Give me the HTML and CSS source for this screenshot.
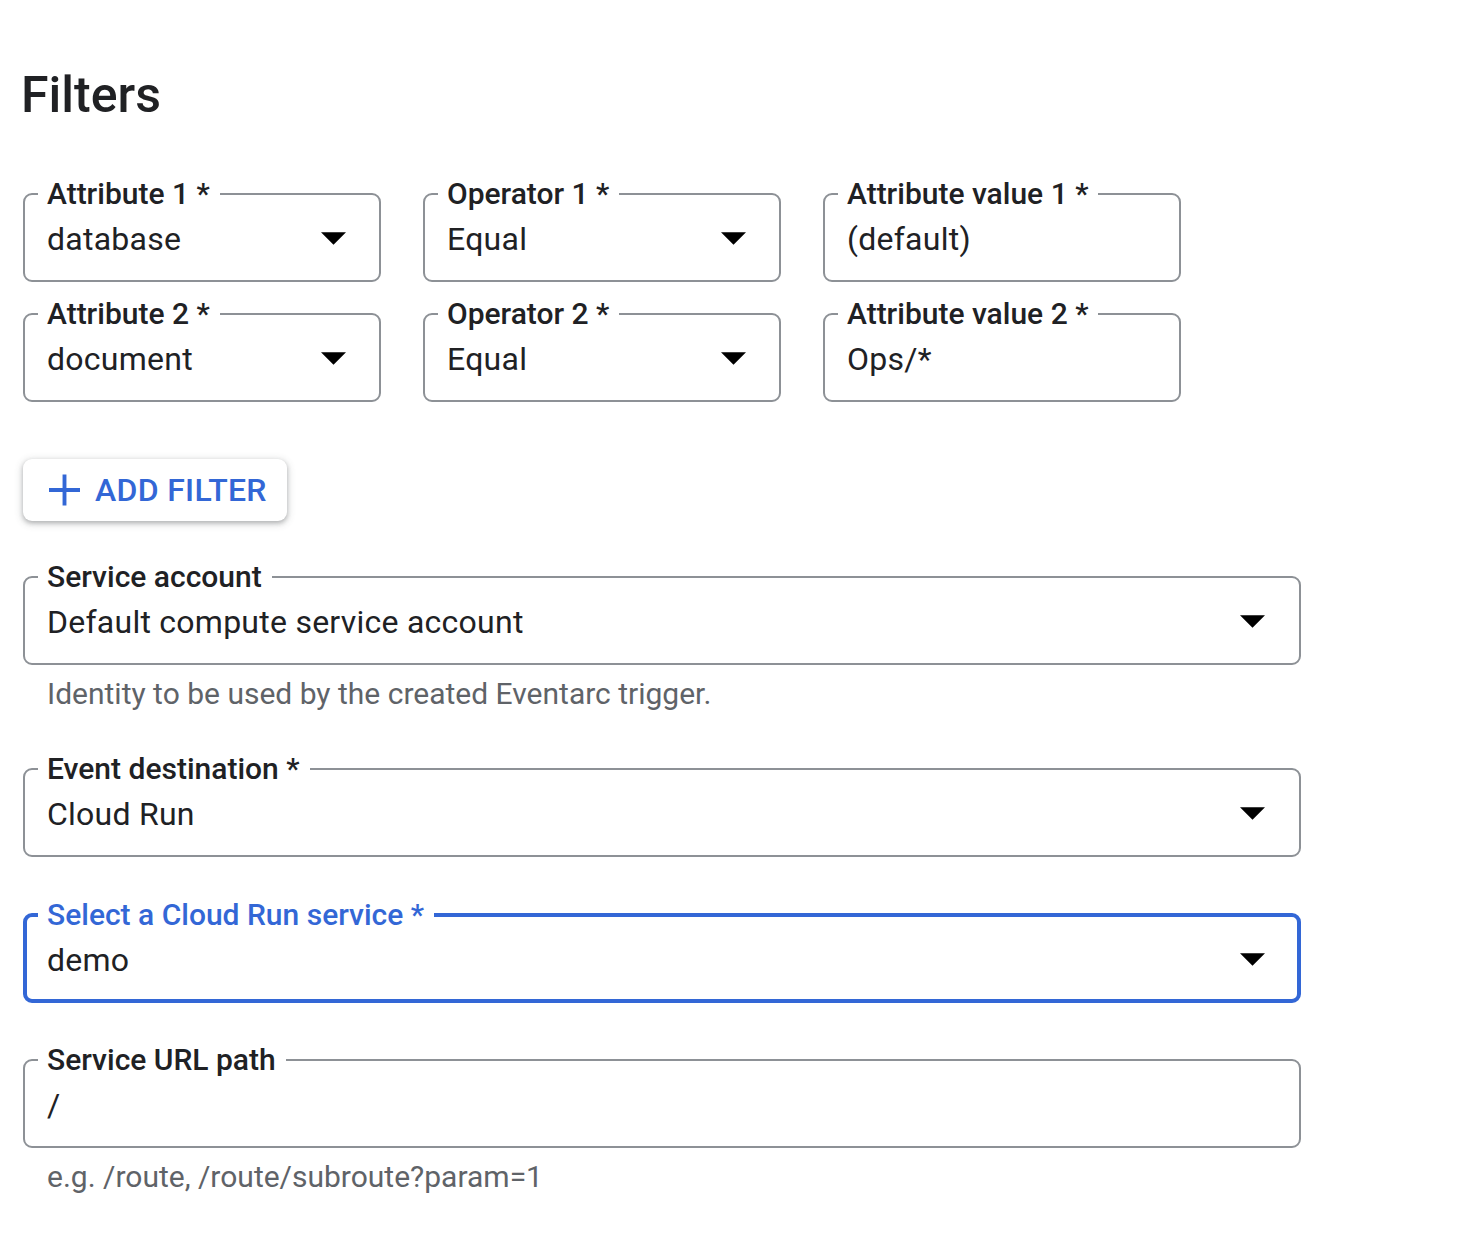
FILE: index.html
```html
<!DOCTYPE html>
<html lang="en">
<head>
<meta charset="utf-8">
<title>Filters</title>
<link rel="stylesheet" href="styles.css">
</head>
<body>
<main class="page">
  <h1 class="title">Filters</h1>

  <div class="filter-grid">
    <fieldset class="field">
      <legend class="field-label">Attribute 1 *</legend>
      <div class="field-row"><span class="field-value">database</span><svg class="arrow" viewBox="0 0 26 13"><path d="M0 0h26L13 13z"/></svg></div>
    </fieldset>
    <fieldset class="field">
      <legend class="field-label">Operator 1 *</legend>
      <div class="field-row"><span class="field-value">Equal</span><svg class="arrow" viewBox="0 0 26 13"><path d="M0 0h26L13 13z"/></svg></div>
    </fieldset>
    <fieldset class="field">
      <legend class="field-label">Attribute value 1 *</legend>
      <div class="field-row"><span class="field-value">(default)</span></div>
    </fieldset>
    <fieldset class="field">
      <legend class="field-label">Attribute 2 *</legend>
      <div class="field-row"><span class="field-value">document</span><svg class="arrow" viewBox="0 0 26 13"><path d="M0 0h26L13 13z"/></svg></div>
    </fieldset>
    <fieldset class="field">
      <legend class="field-label">Operator 2 *</legend>
      <div class="field-row"><span class="field-value">Equal</span><svg class="arrow" viewBox="0 0 26 13"><path d="M0 0h26L13 13z"/></svg></div>
    </fieldset>
    <fieldset class="field">
      <legend class="field-label">Attribute value 2 *</legend>
      <div class="field-row"><span class="field-value">Ops/*</span></div>
    </fieldset>
  </div>

  <button class="add-btn" type="button">
    <svg class="plus" viewBox="0 0 32 32"><path d="M16 0v32M0 16h32"/></svg>
    <span>ADD FILTER</span>
  </button>

  <div class="wide">
    <fieldset class="field">
      <legend class="field-label">Service account</legend>
      <div class="field-row"><span class="field-value">Default compute service account</span><svg class="arrow" viewBox="0 0 26 13"><path d="M0 0h26L13 13z"/></svg></div>
    </fieldset>
    <p class="hint">Identity to be used by the created Eventarc trigger.</p>
  </div>

  <div class="wide gap-top">
    <fieldset class="field">
      <legend class="field-label">Event destination *</legend>
      <div class="field-row"><span class="field-value">Cloud Run</span><svg class="arrow" viewBox="0 0 26 13"><path d="M0 0h26L13 13z"/></svg></div>
    </fieldset>
  </div>

  <div class="wide gap-top2">
    <fieldset class="field focused">
      <legend class="field-label">Select a Cloud Run service *</legend>
      <div class="field-row"><span class="field-value">demo</span><svg class="arrow" viewBox="0 0 26 13"><path d="M0 0h26L13 13z"/></svg></div>
    </fieldset>
  </div>

  <div class="wide gap-top3">
    <fieldset class="field">
      <legend class="field-label">Service URL path</legend>
      <div class="field-row"><span class="field-value">/</span></div>
    </fieldset>
    <p class="hint">e.g. /route, /route/subroute?param=1</p>
  </div>
</main>
</body>
</html>
```

FILE: styles.css
```css
* { box-sizing: border-box; }

html, body {
  margin: 0;
  padding: 0;
  background: #ffffff;
}

body {
  font-family: Roboto, "Liberation Sans", Arial, sans-serif;
  color: #202124;
}

.page {
  padding: 66px 0 0 23px;
}

.title {
  margin: 0 0 52px -2px;
  font-size: 50px;
  line-height: 58px;
  font-weight: 500;
  color: #202124;
}

.filter-grid {
  display: grid;
  grid-template-columns: repeat(3, 358px);
  column-gap: 42px;
  row-gap: 14px;
}

.field {
  margin: 0;
  min-width: 0;
  padding: 7px 33px 21px 22px;
  border: 2px solid #8d9196;
  border-radius: 9px;
}

.field-label {
  margin-left: -9px;
  padding: 0 10px 0 9px;
  font-size: 30px;
  line-height: 36px;
  font-weight: 500;
  color: #202124;
  white-space: nowrap;
}

.field-row {
  display: flex;
  align-items: center;
  justify-content: space-between;
  height: 40px;
}

.field-value {
  font-size: 32px;
  line-height: 40px;
  letter-spacing: 0.25px;
  color: #202124;
  white-space: nowrap;
}

.arrow {
  width: 25px;
  height: 13px;
  flex: none;
  fill: #000000;
  margin-top: -2px;
}

.add-btn {
  display: flex;
  align-items: center;
  margin-top: 57px;
  height: 62px;
  width: 264px;
  padding: 0 0 0 26px;
  border: none;
  border-radius: 9px;
  background: #ffffff;
  box-shadow: 0 2px 4px rgba(60, 64, 67, 0.3), 0 2px 7px 2px rgba(60, 64, 67, 0.15);
  font-family: Roboto, "Liberation Sans", Arial, sans-serif;
  font-size: 32px;
  font-weight: 500;
  letter-spacing: 0.3px;
  color: #3367d6;
  cursor: pointer;
}

.plus {
  width: 31px;
  height: 32px;
  margin-right: 15px;
  stroke: #3367d6;
  stroke-width: 4;
  fill: none;
}

.wide {
  width: 1278px;
  margin-top: 38px;
}

.gap-top { margin-top: 40px; }
.gap-top2 { margin-top: 40px; }
.gap-top3 { margin-top: 39px; }

.wide .field {
  padding-right: 34px;
}

.focused {
  border: 4px solid #3367d6;
  padding-left: 20px;
  padding-bottom: 19px;
}

.wide .focused {
  padding-right: 32px;
}

.focused .field-label {
  color: #3367d6;
  margin-left: -9px;
}

.hint {
  margin: 12px 0 0 24px;
  font-size: 30px;
  line-height: 34px;
  color: #5f6368;
}
```
